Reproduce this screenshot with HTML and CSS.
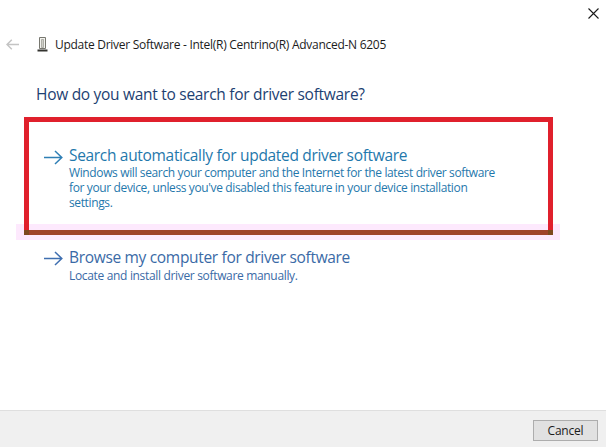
FILE: index.html
```html
<!doctype html>
<html>
  <head>
    <title>Update Driver Software</title>
    <link rel="stylesheet" href="styles.css">
  </head>
  <body>
    <div class="window">
      <div class="close-row">
        <button type="button" class="close-btn" title="Close">
          <svg width="11" height="11" viewBox="0 0 11 11"><path d="M0.5 0.5L10.5 10.5M10.5 0.5L0.5 10.5" stroke="#1a1a1a" stroke-width="1.1" fill="none"/></svg>
        </button>
      </div>
      <header class="title-row">
        <svg class="back-arrow" width="13" height="11" viewBox="0 0 13 11"><path d="M13 5.5H1.2M5.8 0.7L1 5.5L5.8 10.3" stroke="#c4c4c4" stroke-width="1.5" fill="none"/></svg>
        <svg class="device-icon" width="11" height="15" viewBox="0 0 11 15">
          <path d="M2.5 0.5H8.5V11.5H2.5Z" fill="#f2f2ee" stroke="#77776f"/>
          <path d="M4.5 2.5H6.5V10.5H4.5Z" fill="#cfcfc8" stroke="#9a9a92" stroke-width="0.7"/>
          <path d="M0.5 13.5H10.5" stroke="#33332f" stroke-width="2"/>
        </svg>
        <span class="title-text">Update Driver Software - Intel(R) Centrino(R) Advanced-N 6205</span>
      </header>
      <main class="content">
        <h1 class="question">How do you want to search for driver software?</h1>
        <div class="pink-strip"></div>
        <a class="option option-boxed">
          <svg class="option-arrow" width="19" height="15" viewBox="0 0 19 15"><path d="M0 7.5H17.5M11 1L17.8 7.5L11 14" stroke="#2f7fb5" stroke-width="1.5" fill="none"/></svg>
          <div class="option-body">
            <div class="option-title">Search automatically for updated driver software</div>
            <div class="option-desc">Windows will search your computer and the Internet for the latest driver software for your device, unless you've disabled this feature in your device installation settings.</div>
          </div>
        </a>
        <a class="option option-plain">
          <svg class="option-arrow" width="19" height="15" viewBox="0 0 19 15"><path d="M0 7.5H17.5M11 1L17.8 7.5L11 14" stroke="#3f6fb0" stroke-width="1.5" fill="none"/></svg>
          <div class="option-body">
            <div class="option-title browse">Browse my computer for driver software</div>
            <div class="option-desc browse">Locate and install driver software manually.</div>
          </div>
        </a>
      </main>
      <footer class="footer">
        <button type="button" class="cancel-btn">Cancel</button>
      </footer>
    </div>
  </body>
</html>
```

FILE: styles.css
```css
* {
  box-sizing: border-box;
}
html, body {
  margin: 0;
  height: 100%;
  background: #ffffff;
}
body {
  font-family: "Open Sans", "Noto Sans", sans-serif;
  overflow: hidden;
}
.window {
  display: flex;
  flex-direction: column;
  height: 447px;
}
.close-row {
  display: flex;
  justify-content: flex-end;
  height: 35px;
  padding: 8px 7px 0 0;
}
.close-btn {
  background: transparent;
  border: none;
  padding: 0;
  width: 11px;
  height: 11px;
  display: flex;
}
.title-row {
  display: flex;
  align-items: center;
  height: 18px;
  padding-left: 6px;
}
.back-arrow {
  margin-right: 18px;
}
.device-icon {
  margin-right: 7px;
}
.title-text {
  font-size: 12px;
  color: #1c1c1c;
  letter-spacing: -0.28px;
  white-space: nowrap;
}
.content {
  flex: 1;
  position: relative;
  padding: 0 53px 0 24px;
}
.question {
  margin: 31px 0 13px 12px;
  font-size: 15.5px;
  line-height: 20px;
  font-weight: 400;
  color: #1d3f72;
  letter-spacing: -0.29px;
  white-space: nowrap;
}
.pink-strip {
  position: absolute;
  left: 16px;
  top: 171px;
  width: 544px;
  height: 16px;
  background: #fde9fd;
}
.option {
  display: flex;
  position: relative;
}
.option-boxed {
  height: 118px;
  border: 5px solid #e0202c;
  padding: 23px 0 0 15px;
}
.option-boxed::after {
  content: "";
  position: absolute;
  left: -5px;
  right: -5px;
  bottom: -5px;
  height: 5px;
  background: linear-gradient(to right, #7d4a1e 5px, #a0432a 5px, #a0432a calc(100% - 5px), #7d4a1e calc(100% - 5px));
}
.option-plain {
  padding: 12px 0 0 20px;
}
.option-arrow {
  flex: none;
  margin: 5px 6px 0 0;
}
.option-plain .option-arrow {
  margin-top: 4px;
}
.option-title {
  font-size: 15.5px;
  line-height: 20px;
  color: #1f78ac;
  letter-spacing: -0.32px;
  white-space: nowrap;
}
.option-desc {
  font-size: 12px;
  line-height: 15px;
  color: #1f78ac;
  letter-spacing: -0.37px;
  width: 440px;
}
.option-title.browse, .option-desc.browse {
  color: #3a6aa6;
}
.option-desc.browse {
  margin-top: 1px;
  letter-spacing: -0.33px;
}
.footer {
  height: 37px;
  background: #f0f0f0;
  border-top: 1px solid #dfdfdf;
  display: flex;
  justify-content: flex-end;
  padding: 9px 8px 0 0;
}
.cancel-btn {
  width: 65px;
  height: 21px;
  background: #e1e1e1;
  border: 1px solid #adadad;
  font-family: inherit;
  font-size: 12px;
  letter-spacing: -0.2px;
  color: #1a1a1a;
  padding: 0;
}
```
